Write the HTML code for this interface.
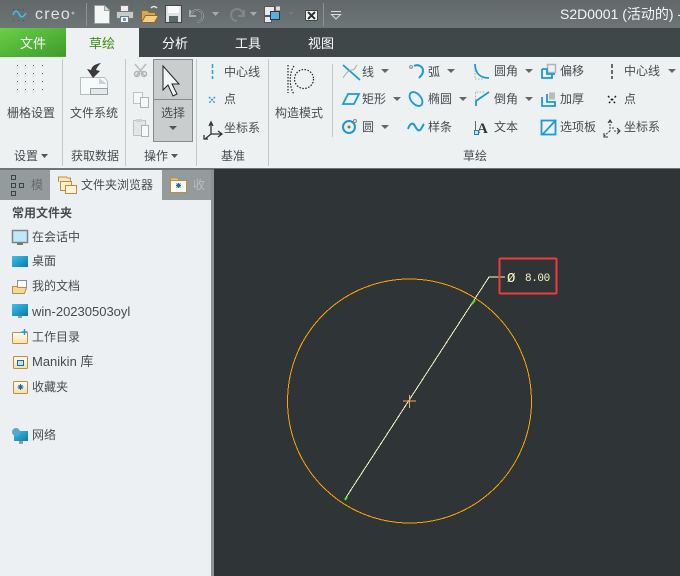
<!DOCTYPE html>
<html><head><meta charset="utf-8"><style>
html,body{margin:0;padding:0;background:#2f3536}
svg{display:block}
text{font-family:"Liberation Sans","Noto Sans CJK SC",sans-serif;font-size:12px;fill:#474c4f}
.w{fill:#fff;font-size:13px}
.m{font-size:13px}
.d{fill:#fbf6c4;font-family:"Liberation Mono",monospace;font-size:11px}
</style></head><body>
<svg width="680" height="576" viewBox="0 0 680 576" xmlns="http://www.w3.org/2000/svg">
<defs>
<linearGradient id="tb" x1="0" y1="0" x2="0" y2="1"><stop offset="0" stop-color="#616869"/><stop offset="1" stop-color="#6e7576"/></linearGradient>
<linearGradient id="gr" x1="0" y1="0" x2="1" y2="1"><stop offset="0" stop-color="#66d145"/><stop offset="1" stop-color="#3f9a2d"/></linearGradient>
<linearGradient id="sc" x1="0" y1="0" x2="1" y2="1"><stop offset="0" stop-color="#38c3e8"/><stop offset="1" stop-color="#0f78ae"/></linearGradient>
<linearGradient id="fo" x1="0" y1="0" x2="0" y2="1"><stop offset="0" stop-color="#fffdf0"/><stop offset="1" stop-color="#f6dfa8"/></linearGradient>
</defs>
<!-- title bar -->
<rect width="680" height="28" fill="url(#tb)"/>
<path d="M13 15c2-5 4-5 6-1s4 4 7-1" fill="none" stroke="#45bce8" stroke-width="1.6"/>
<g fill="#474d4e"><rect x="13" y="9" width="1" height="1"/><rect x="18" y="9" width="1" height="1"/><rect x="23" y="9" width="1" height="1"/><rect x="13" y="20" width="1" height="1"/><rect x="18" y="20" width="1" height="1"/><rect x="23" y="20" width="1" height="1"/></g>
<text x="35" y="19" style="font-size:16px;fill:#e0e4e4;letter-spacing:1.200px">creo</text>
<circle cx="73" cy="13" r="1" fill="none" stroke="#dde" stroke-width=".6"/>
<rect x="86" y="3" width="1" height="23" fill="#8d9494"/>
<rect x="323" y="3" width="1" height="23" fill="#8d9494"/>
<path d="M94.500 5.500h10l5 5v13h-15z" fill="#f4f6f6" stroke="#9ba1a1"/><path d="M104.500 5.500v5h5" fill="#d5d9d9" stroke="#9ba1a1"/>
<rect x="120.500" y="5.500" width="8" height="7" fill="#eee" stroke="#777"/><rect x="116.500" y="11.500" width="17" height="7" rx="1" fill="#c5caca" stroke="#777"/><rect x="120.500" y="16.500" width="8" height="6" fill="#f4f4f4" stroke="#777"/><rect x="123" y="18" width="3" height="3" fill="#3ba8d8"/>
<path d="M141.500 22.500v-12h6l2 2h6v10z" fill="#d8a850" stroke="#8a6a30"/><path d="M141.500 22.500l4-7h13l-4 7z" fill="#f3cf85" stroke="#8a6a30"/><path d="M151 8c2-2 4-2 6 0" fill="none" stroke="#e8e8e8" stroke-width="1.500"/>
<rect x="165.500" y="5.500" width="16" height="17" fill="#dfe3e3" stroke="#444"/><rect x="168" y="6" width="11" height="7" fill="#fafafa"/><rect x="169" y="16" width="9" height="6" fill="#59686b"/>
<path d="M191 15a6 6 0 1 1 6 7M190 10v6h6" fill="none" stroke="#a6adad" stroke-width="2"/><path d="M191 15a6 6 0 1 1 6 7" fill="none" stroke="#4c5354" stroke-width=".7"/>
<path d="M212 12h7l-3.500 4z" fill="#a6acac"/>
<path d="M243 15a6 6 0 1 0-6 6M244 10v6h-6" fill="none" stroke="#7e8686" stroke-width="2"/>
<path d="M250 12h7l-3.500 4z" fill="#a6acac"/>
<rect x="264.500" y="6.500" width="10" height="9" fill="#e8ebeb" stroke="#555"/><rect x="264.500" y="16.500" width="7" height="6" fill="#e8ebeb" stroke="#555"/><rect x="270.500" y="11.500" width="9" height="8" fill="#58b0dc" stroke="#334"/><rect x="276" y="6.500" width="4" height="4" fill="#ddd"/>
<path d="M288 12h6l-3 3z" fill="#737a7a"/>
<rect x="305.500" y="10.500" width="12" height="10" rx="1" fill="#f2f3f3" stroke="#444"/><path d="M308 12l7 7M315 12l-7 7" stroke="#333" stroke-width="2"/>
<rect x="331" y="11" width="10" height="1" fill="#ddd"/><path d="M331.500 14.500h9l-4.500 4.500z" fill="none" stroke="#ddd"/>
<text x="560" y="19" style="font-size:14px;fill:#f4f6f6">S2D0001 (活动的) -</text>
<!-- tab bar -->
<rect y="28" width="680" height="29" fill="#3f4748"/>
<rect y="28" width="66" height="29" fill="url(#gr)"/>
<rect x="66" y="28" width="73" height="31" fill="#eef1f2"/>
<text x="20" y="48" class="w">文件</text>
<text x="89" y="48" class="w" style="fill:#3c8c12">草绘</text>
<text x="162" y="48" class="w">分析</text>
<text x="235" y="48" class="w">工具</text>
<text x="308" y="48" class="w">视图</text>
<!-- ribbon -->
<rect y="57" width="680" height="112" fill="#eef1f2"/>
<rect y="56" width="66" height="1" fill="#49b02c"/>
<g fill="#c3c8c9"><rect x="62" y="59" width="1" height="107"/><rect x="125" y="59" width="1" height="107"/><rect x="196" y="59" width="1" height="107"/><rect x="268" y="59" width="1" height="107"/><rect x="332" y="64" width="1" height="73"/></g>
<g fill="#555"><rect x="17" y="65" width="1" height="1"/><rect x="25" y="65" width="1" height="1"/><rect x="33" y="65" width="1" height="1"/><rect x="42" y="65" width="1" height="1"/><rect x="17" y="73" width="1" height="1"/><rect x="25" y="73" width="1" height="1"/><rect x="33" y="73" width="1" height="1"/><rect x="42" y="73" width="1" height="1"/><rect x="17" y="81" width="1" height="1"/><rect x="25" y="81" width="1" height="1"/><rect x="33" y="81" width="1" height="1"/><rect x="42" y="81" width="1" height="1"/><rect x="17" y="89" width="1" height="1"/><rect x="25" y="89" width="1" height="1"/><rect x="33" y="89" width="1" height="1"/><rect x="42" y="89" width="1" height="1"/></g>
<text x="7" y="117">栅格设置</text>
<text x="14" y="160">设置</text><path d="M41 154h7l-3.500 4z" fill="#555"/>
<path d="M80.500 94.500v-17h24l3 4v13z" fill="#f7fafb" stroke="#b7bcbe"/><path d="M99 78l8 6h-8z" fill="#ccd2d4"/><path d="M90.500 88.500h17v6h-17z" fill="#e3e8ea" stroke="#9aa0a2"/>
<path d="M101 63c-6 1-9 3-10 7l-4-1 6 9 7-7-4-1c1-3 3-5 5-7z" fill="#3a3a3a"/>
<text x="70" y="117">文件系统</text>
<text x="71" y="160">获取数据</text>
<!-- clipboard -->
<path d="M135 64l10 12M146 64l-10 12" stroke="#b8bcbc" stroke-width="1.500"/><circle cx="137" cy="74" r="2.500" fill="none" stroke="#b0b4b4" stroke-width="1.500"/><circle cx="144" cy="74" r="2.500" fill="none" stroke="#b0b4b4" stroke-width="1.500"/>
<rect x="133.500" y="92.500" width="9" height="11" fill="#f6f7f7" stroke="#bdc1c1"/><rect x="140.500" y="97.500" width="8" height="10" fill="#f6f7f7" stroke="#aeb2b2"/>
<rect x="133.500" y="120.500" width="12" height="15" fill="#e4e6e6" stroke="#bdc1c1"/><rect x="136" y="119" width="6" height="3" fill="#cfd2d2"/><rect x="141.500" y="125.500" width="7" height="11" fill="#f8f8f8" stroke="#aeb2b2"/>
<rect x="153.500" y="59.500" width="39" height="82" fill="#c9cdcd" stroke="#868b8b"/><rect x="154" y="99" width="38" height="1" fill="#868b8b"/>
<path d="M163 66l0 24 5-5 5 11 4-2-5-10h7z" fill="#f4f6f6" stroke="#222"/>
<text x="161" y="117">选择</text>
<path d="M169 126h8l-4 4z" fill="#555"/>
<text x="144" y="160">操作</text><path d="M171 154h7l-3.500 4z" fill="#555"/>
<!-- datum -->
<path d="M212.500 64v4M212.500 70v4M212.500 76v3" stroke="#2a9fd6" stroke-width="1.500"/>
<text x="224" y="76">中心线</text>
<path d="M209 97l6 6M215 97l-6 6" stroke="#2a9fd6" stroke-width="1.400" stroke-dasharray="2 1"/>
<text x="224" y="103">点</text>
<path d="M211 123v11l-6 5M211 134h10M209 126l2-4 2 4M218 131l4 3-4 3M204 135v4h4" fill="none" stroke="#333" stroke-width="1.300"/>
<text x="224" y="132">坐标系</text>
<text x="221" y="160">基准</text>
<!-- construction -->
<g fill="none" stroke="#222" stroke-dasharray="1.500 1.500" stroke-width="1.200"><path d="M288 65v28"/><path d="M294 66c-5 7-5 21 0 28"/><circle cx="304" cy="79" r="9.500"/></g>
<text x="275" y="117">构造模式</text>
<!-- sketch col 1 -->
<path d="M343 65l17 15" stroke="#1c9ad6" stroke-width="1.800"/><path d="M343 78c3-5 6-8 9-8s3-3 5-5" fill="none" stroke="#a6abad"/>
<text x="362" y="76">线</text><path d="M381 69h8l-4 4z" fill="#666"/>
<path d="M348 94h11l-5 10h-11z" fill="none" stroke="#1c9ad6" stroke-width="1.800"/>
<text x="362" y="103">矩形</text><path d="M393 97h8l-4 4z" fill="#666"/>
<circle cx="349" cy="127" r="6" fill="none" stroke="#1c9ad6" stroke-width="2"/><circle cx="349" cy="127" r="1.500" fill="#777"/><circle cx="355" cy="121" r="1.500" fill="#eee" stroke="#888"/>
<text x="362" y="131">圆</text><path d="M381 125h8l-4 4z" fill="#666"/>
<!-- col 2 -->
<path d="M414 66c4-2 9 0 9 5 0 3-2 5-4 7" fill="none" stroke="#1c9ad6" stroke-width="2"/><circle cx="411" cy="67" r="1.400" fill="#eee" stroke="#888"/>
<text x="428" y="76">弧</text><path d="M447 69h8l-4 4z" fill="#666"/>
<ellipse cx="416" cy="99" rx="5" ry="8" transform="rotate(-40 416 99)" fill="none" stroke="#1c9ad6" stroke-width="1.800"/>
<text x="428" y="103">椭圆</text><path d="M459 97h8l-4 4z" fill="#666"/>
<path d="M408 129c2-6 5-7 7-3s4 6 6 3 2-4 3-5" fill="none" stroke="#1c9ad6" stroke-width="2"/>
<text x="428" y="131">样条</text>
<!-- col 3 -->
<path d="M475 64c0 9 5 14 14 14" fill="none" stroke="#1c9ad6" stroke-width="1.800"/><path d="M475 70v9h9" fill="none" stroke="#aaa" stroke-dasharray="1.500 1.500"/>
<text x="494" y="75">圆角</text><path d="M525 69h8l-4 4z" fill="#666"/>
<path d="M476 106v-5l13-9" fill="none" stroke="#1c9ad6" stroke-width="1.800"/><path d="M475.500 100v-8h10" fill="none" stroke="#aaa" stroke-dasharray="1.500 1.500"/>
<text x="494" y="103">倒角</text><path d="M525 97h8l-4 4z" fill="#666"/>
<text x="477" y="133" style="font-family:'Liberation Serif',serif;font-weight:bold;font-size:15px;fill:#333">A</text><path d="M475.500 121v10" stroke="#666"/><rect x="474.500" y="130.500" width="4" height="4" fill="#bfe4f4" stroke="#1a7fb0"/>
<text x="494" y="131">文本</text>
<!-- col 4 -->
<rect x="547.500" y="64.500" width="8" height="8" fill="none" stroke="#aeb3b5" stroke-width="1.500"/><path d="M542 69v9h10v-4M542 69h5v5h8" fill="none" stroke="#1c9ad6" stroke-width="1.800"/>
<text x="560" y="75">偏移</text>
<rect x="549" y="92.500" width="6" height="7" fill="#bbb"/><path d="M542 97v9h13v-4h-8v-8" fill="none" stroke="#1c9ad6" stroke-width="1.800"/>
<text x="560" y="103">加厚</text>
<rect x="541.500" y="120.500" width="14" height="14" fill="none" stroke="#1c9ad6" stroke-width="1.800"/><path d="M543 134l13-14" stroke="#1c9ad6" stroke-width="1.800"/>
<text x="560" y="131">选项板</text>
<!-- col 5 -->
<path d="M612 64v4M612 70v4M612 76v3" stroke="#222" stroke-width="1.300"/>
<text x="624" y="75">中心线</text><path d="M668 69h8l-4 4z" fill="#666"/>
<path d="M608 96l8 8M616 96l-8 8" stroke="#111" stroke-width="1.300" stroke-dasharray="2 2"/>
<text x="624" y="103">点</text>
<path d="M610 121v10M610 131l-6 5M612 128h3M614 131h5" fill="none" stroke="#444" stroke-dasharray="2 1"/><path d="M608 123l2-3 2 3M617 128l3 3-3 3M604 133v4h4" fill="none" stroke="#333"/>
<text x="624" y="131">坐标系</text>
<text x="463" y="160">草绘</text>
<!-- ribbon bottom line -->
<rect y="168" width="680" height="2" fill="#6e7576"/>
<!-- canvas -->
<rect x="214" y="169" width="466" height="407" fill="#2f3536"/>
<!-- left panel -->
<rect y="170" width="211" height="406" fill="#edf0f2"/>
<rect x="211" y="170" width="3" height="406" fill="#8c9393"/>
<rect y="170" width="50" height="30" fill="#949b9c"/>
<rect x="162" y="170" width="49" height="30" fill="#949b9c"/>
<rect x="50" y="170" width="112" height="30" fill="#edf0f2"/>
<g fill="none" stroke="#3d4446"><rect x="11.500" y="175.500" width="4" height="4"/><rect x="11.500" y="183.500" width="4" height="4"/><rect x="11.500" y="191.500" width="4" height="4"/><rect x="19.500" y="183.500" width="4" height="4"/></g>
<text x="31" y="189" style="fill:#666b6d">模</text>
<!-- folder tabs -->
<path d="M58.500 182v-5h8l1 1h3v4" fill="#f8e6b8" stroke="#b98f45"/><rect x="60.500" y="181.500" width="11" height="9" fill="#fbedc4" stroke="#b98f45"/><rect x="65.500" y="185.500" width="11" height="8" fill="#fdf4da" stroke="#b98f45"/>
<text x="81" y="189">文件夹浏览器</text>
<path d="M170.500 181v-3h7l1 1v2" fill="#e8cc8a" stroke="#b98f45"/><rect x="170.500" y="180.500" width="16" height="12" fill="#fffaf0" stroke="#b98f45"/><path d="M178.500 183v5M176 185.500h5M176.500 183.500l4 4M180.500 183.500l-4 4" stroke="#1a6c9c"/>
<text x="193" y="189" style="fill:#b9bebf">收</text>
<!-- list -->
<text x="12" y="217" style="font-weight:bold">常用文件夹</text>
<rect x="12.500" y="230.500" width="15" height="12" fill="#bfe8fa" stroke="#7d8486" stroke-width="1.500"/><rect x="17" y="243" width="6" height="2" fill="#777"/>
<text x="32" y="241">在会话中</text>
<rect x="12" y="256" width="16" height="11" fill="url(#sc)"/>
<text x="32" y="265">桌面</text>
<path d="M17.500 280.500h9v7h-9z" fill="#fafafa" stroke="#8c8c8c"/><path d="M12.500 292.500v-6h5v1h9l-2 6h-12z" fill="#f5d898" stroke="#b98f45"/>
<text x="32" y="290">我的文档</text>
<rect x="12" y="304" width="16" height="12" fill="url(#sc)"/><rect x="18" y="316" width="4" height="2" fill="#999"/>
<text x="32" y="316" class="m">win-20230503oyl</text>
<rect x="12.500" y="332.500" width="15" height="11" rx="1" fill="url(#fo)" stroke="#b98f45"/><path d="M24.500 329v6M21.500 332h6" stroke="#1c9ad6" stroke-width="1.500"/>
<text x="32" y="341">工作目录</text>
<rect x="13.500" y="356.500" width="14" height="12" rx="1" fill="url(#fo)" stroke="#b98f45"/><rect x="17.500" y="360.500" width="6" height="5" fill="#bfe0f0" stroke="#1a6c9c"/>
<text x="32" y="366" class="m">Manikin 库</text>
<rect x="13.500" y="381.500" width="14" height="12" rx="1" fill="url(#fo)" stroke="#b98f45"/><path d="M20.500 384v6M17.500 387h6M18.500 385l4 4M22.500 385l-4 4" stroke="#1a6c9c"/>
<text x="32" y="391">收藏夹</text>
<rect x="14" y="431" width="14" height="10" fill="url(#sc)"/><rect x="19" y="441" width="4" height="3" fill="#999"/><circle cx="16" cy="432" r="4" fill="#5ba6d0"/>
<text x="32" y="439">网络</text>
<!-- sketch -->
<circle cx="409.500" cy="401" r="122" fill="none" stroke="#ffa500" stroke-width="1" shape-rendering="crispEdges"/>
<path d="M345 499L489 277H505" fill="none" stroke="#fbf6c4" stroke-width="1" shape-rendering="crispEdges"/>
<path d="M472 304l3-4M345 500l2-3" stroke="#55e020" stroke-width="2"/>
<path d="M403 401h13M409.500 395v13" stroke="#e8b060" stroke-width="1" shape-rendering="crispEdges"/>
<rect x="499.500" y="258.500" width="57" height="35" rx="1" fill="none" stroke="#ee3c3c" stroke-width="2"/>
<text x="507" y="282" class="d" style="font-size:14px">Ø</text>
<text x="525" y="281" class="d" style="letter-spacing:-.4px">8.00</text>
</svg>
</body></html>
